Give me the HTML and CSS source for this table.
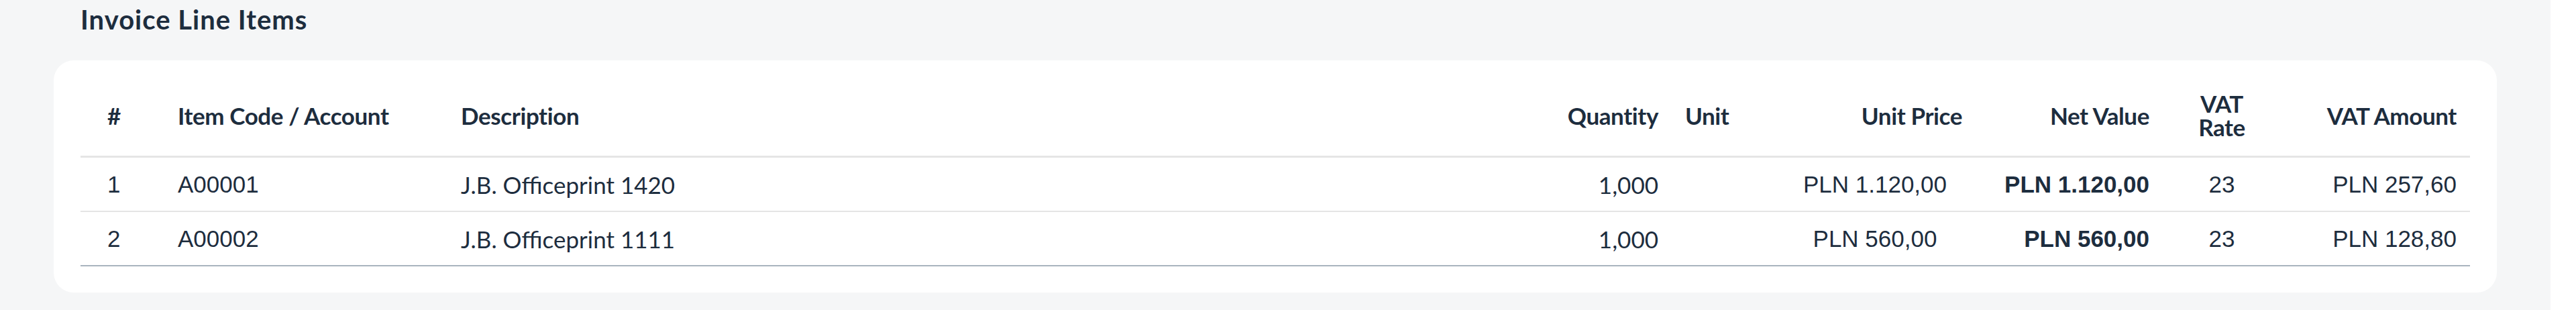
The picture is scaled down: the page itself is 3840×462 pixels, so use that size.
FILE: index.html
```html
<!DOCTYPE html>
<html lang="en">
  <head>
    <meta charset="UTF-8" />
    <meta name="viewport" content="width=device-width, initial-scale=1.0" />
    <title>Invoice Line Items</title>
    <link rel="stylesheet" href="styles.css">
  </head>
  <body>
    <main class="page">
      <h2 class="section-title">Invoice Line Items</h2>

      <div class="card">
        <table class="items">
          <colgroup>
            <col class="c-no">
            <col class="c-code">
            <col>
            <col class="c-qty">
            <col class="c-unit">
            <col class="c-price">
            <col class="c-net">
            <col class="c-rate">
            <col class="c-vat">
          </colgroup>
          <thead>
            <tr>
              <th class="no">#</th>
              <th>Item Code / Account</th>
              <th>Description</th>
              <th class="right">Quantity</th>
              <th>Unit</th>
              <th class="right">Unit Price</th>
              <th class="right">Net Value</th>
              <th class="center">VAT Rate</th>
              <th class="right">VAT Amount</th>
            </tr>
          </thead>
          <tbody>
            <tr>
              <td class="no">1</td>
              <td>A00001</td>
              <td class="soft">J.B. Officeprint 1420</td>
              <td class="soft right">1,000</td>
              <td></td>
              <td class="center">PLN 1.120,00</td>
              <td class="right strong">PLN 1.120,00</td>
              <td class="center">23</td>
              <td class="right">PLN 257,60</td>
            </tr>
            <tr>
              <td class="no">2</td>
              <td>A00002</td>
              <td class="soft">J.B. Officeprint 1111</td>
              <td class="soft right">1,000</td>
              <td></td>
              <td class="center">PLN 560,00</td>
              <td class="right strong">PLN 560,00</td>
              <td class="center">23</td>
              <td class="right">PLN 128,80</td>
            </tr>
          </tbody>
        </table>
      </div>
    </main>
    <aside class="gutter"></aside>
  </body>
</html>
```

FILE: styles.css
```css
body {
  margin: 0;
  display: flex;
  min-height: 462px;
  background-color: #f5f6f7;
  color: #1d2d3e;
  font-family: "Liberation Sans", Arial, sans-serif;
}

.page {
  flex: 1;
  padding: 0 80px;
}

.gutter {
  width: 38px;
  background-color: #ffffff;
}

.section-title {
  margin: 0 0 37px;
  padding: 5px 0 0 40px;
  font-family: Lato, "Noto Sans", sans-serif;
  font-size: 40px;
  font-weight: 700;
  line-height: 48px;
  letter-spacing: 1px;
}

.card {
  background-color: #ffffff;
  border-radius: 30px;
  padding: 22px 40px 39px;
}

.items {
  width: 100%;
  table-layout: fixed;
  border-collapse: separate;
  border-spacing: 0;
  font-size: 35px;
}

.c-no { width: 125px; }
.c-code { width: 422px; }
.c-qty { width: 200px; }
.c-unit { width: 153px; }
.c-price { width: 300px; }
.c-net { width: 279px; }
.c-rate { width: 176px; }
.c-vat { width: 282px; }

.items th {
  height: 120px;
  padding: 0 20px;
  text-align: left;
  vertical-align: middle;
  font-family: Lato, "Noto Sans", sans-serif;
  font-weight: 700;
  line-height: 35px;
  letter-spacing: -0.4px;
  border-bottom: 3px solid #e5e5e5;
}

.items td {
  height: 79px;
  padding: 0 20px;
  vertical-align: middle;
  line-height: 40px;
  white-space: nowrap;
  border-bottom: 2px solid #e5e5e5;
}

.items tbody tr:last-child td {
  border-bottom-color: #a9b4be;
}

.items .no {
  padding-left: 40px;
}

.items .soft {
  font-family: Lato, "Noto Sans", sans-serif;
}

.items .right {
  text-align: right;
}

.items .center {
  text-align: center;
}

.items .strong {
  font-weight: 700;
}
```
